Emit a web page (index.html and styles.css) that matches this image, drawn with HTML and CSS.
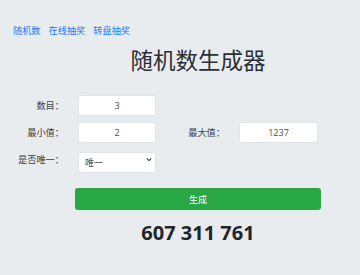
FILE: index.html
```html
<!DOCTYPE html>
<html lang="zh-CN">
<head>
<meta charset="utf-8">
<title>随机数生成器</title>
<link rel="stylesheet" href="styles.css">
</head>
<body>
<nav class="nav">
  <a href="#">随机数</a>
  <a href="#">在线抽奖</a>
  <a href="#">转盘抽奖</a>
</nav>
<h1 class="title">随机数生成器</h1>
<form class="form">
  <label class="label">数目：</label>
  <input class="field" type="text" value="3">
  <span></span><span></span>
  <label class="label">最小值：</label>
  <input class="field" type="text" value="2">
  <label class="label">最大值：</label>
  <input class="field" type="text" value="1237">
  <label class="label">是否唯一：</label>
  <div class="select-wrap">
    <select class="select"><option>唯一</option><option>不唯一</option></select>
    <svg class="chev" viewBox="0 0 8 6" width="6" height="5"><path d="M1 1.5 L4 4.5 L7 1.5" fill="none" stroke="#343a40" stroke-width="1.4"/></svg>
  </div>
</form>
<div class="actions">
  <button class="btn" type="button">生成</button>
</div>
<div class="result">607 311 761</div>
</body>
</html>
```
FILE: styles.css
```css
html, body {
  margin: 0;
  padding: 0;
  background: #e9ecef;
}
body {
  font-family: "Open Sans", "Noto Sans CJK SC", sans-serif;
  color: #212529;
}
.nav {
  display: flex;
  gap: 8px;
  padding: 25px 0 0 13px;
  height: 12px;
  font-size: 9.2px;
  line-height: 12px;
}
.nav a {
  color: #1a7cf4;
  text-decoration: none;
}
.title {
  margin: 11px 0 0 75px;
  width: 246px;
  text-align: center;
  font-size: 22.5px;
  line-height: 26px;
  font-weight: 400;
  color: #2b2f33;
}
.form {
  margin-top: 21px;
  display: grid;
  grid-template-columns: 78px 78px 83px 79px;
  grid-auto-rows: 21px;
  row-gap: 6px;
}
.label {
  text-align: right;
  padding-right: 14px;
  font-size: 9.2px;
  line-height: 21px;
  color: #3c4146;
}
.field, .select {
  box-sizing: border-box;
  width: 100%;
  height: 21px;
  margin: 0;
  border: 1px solid #e1e5e9;
  border-radius: 3px;
  background: #fff;
  font-family: "Open Sans", "Noto Sans CJK SC", sans-serif;
  font-size: 9px;
  color: #495057;
  text-align: center;
  padding: 0 4px;
  outline: none;
}
.select-wrap {
  position: relative;
}
.select {
  appearance: none;
  -webkit-appearance: none;
  text-align: left;
  padding-left: 6px;
}
.chev {
  position: absolute;
  right: 4px;
  top: 8px;
  pointer-events: none;
}
.actions {
  margin: 18px 0 0 75px;
  width: 246px;
}
.btn {
  display: block;
  width: 100%;
  height: 22px;
  border: 0;
  border-radius: 3px;
  background: #28a745;
  color: #fff;
  font-family: "Open Sans", "Noto Sans CJK SC", sans-serif;
  font-size: 9px;
  padding: 0;
}
.result {
  margin: 9px 0 0 75px;
  width: 246px;
  text-align: center;
  font-size: 20px;
  line-height: 28px;
  font-weight: 700;
  color: #212529;
}
```
